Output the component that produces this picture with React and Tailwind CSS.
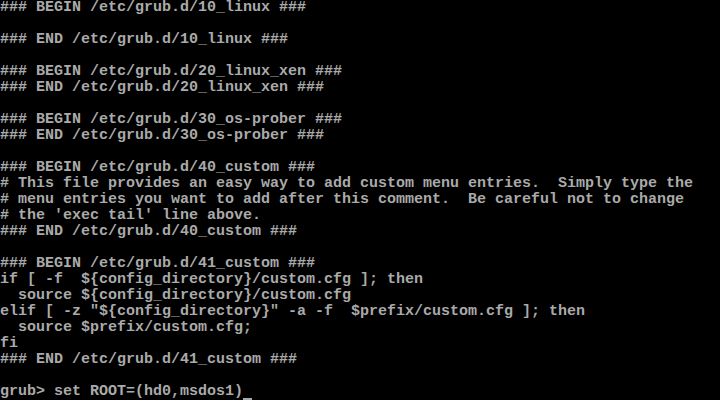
import React from "react";

const lines = [
  "### BEGIN /etc/grub.d/10_linux ###",
  "",
  "### END /etc/grub.d/10_linux ###",
  "",
  "### BEGIN /etc/grub.d/20_linux_xen ###",
  "### END /etc/grub.d/20_linux_xen ###",
  "",
  "### BEGIN /etc/grub.d/30_os-prober ###",
  "### END /etc/grub.d/30_os-prober ###",
  "",
  "### BEGIN /etc/grub.d/40_custom ###",
  "# This file provides an easy way to add custom menu entries.  Simply type the",
  "# menu entries you want to add after this comment.  Be careful not to change",
  "# the 'exec tail' line above.",
  "### END /etc/grub.d/40_custom ###",
  "",
  "### BEGIN /etc/grub.d/41_custom ###",
  "if [ -f  ${config_directory}/custom.cfg ]; then",
  "  source ${config_directory}/custom.cfg",
  'elif [ -z "${config_directory}" -a -f  $prefix/custom.cfg ]; then',
  "  source $prefix/custom.cfg;",
  "fi",
  "### END /etc/grub.d/41_custom ###",
  "",
];

export default function App() {
  return (
    <div className="w-[720px] h-[400px] bg-black overflow-hidden text-[#aaaaaa] font-['Liberation_Mono',monospace] font-bold text-[15px] leading-[16px] whitespace-pre">
      {lines.map((l, i) => (
        <div key={i} className="h-[16px]">
          {l}
        </div>
      ))}
      <div className="h-[16px] flex">
        <span>grub&gt; set ROOT=(hd0,msdos1)</span>
        <span className="inline-block w-[9px] h-[16px] border-b-2 border-[#aaaaaa]"></span>
      </div>
    </div>
  );
}
